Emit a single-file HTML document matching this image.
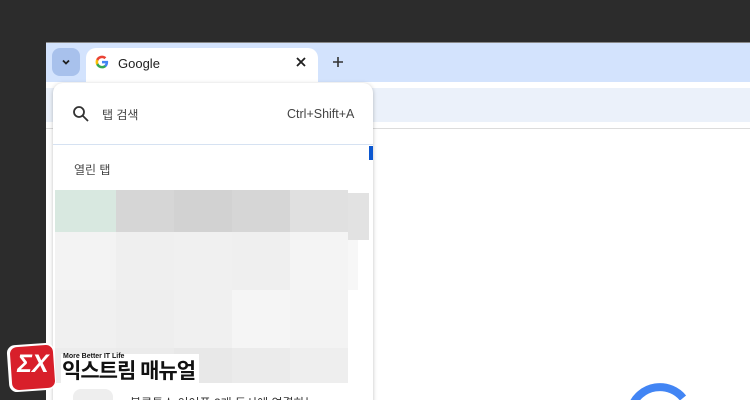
<!DOCTYPE html>
<html style="width:750px;height:400px;overflow:hidden"><head><meta charset="utf-8"><style>
*{margin:0;padding:0;box-sizing:border-box}
body{width:750px;height:400px;overflow:hidden;background:#2c2c2c;position:relative;font-family:"Liberation Sans","Noto Sans CJK KR",sans-serif}
.abs{position:absolute}
.cell{position:absolute}
</style></head><body>
<div class="abs" style="left:46px;top:42px;width:704px;height:358px;background:#fff;border-top:1px solid #888"></div>
<div class="abs" style="left:46px;top:43px;width:704px;height:39px;background:#d3e3fd"></div>
<div class="abs" style="left:46px;top:88px;width:704px;height:34px;background:#ebf1fa"></div>
<div class="abs" style="left:46px;top:128px;width:704px;height:1px;background:#dcdcdc"></div>
<div class="abs" style="left:52px;top:48px;width:28px;height:28px;border-radius:8px;background:#a8c1ec"></div>
<svg class="abs" style="left:60px;top:56px" width="12" height="12"><path d="M3 4.5 L6 7.5 L9 4.5" stroke="#1f1f1f" stroke-width="1.8" fill="none"/></svg>
<div class="abs" style="left:86px;top:48px;width:232px;height:36px;background:#fff;border-radius:10px 10px 0 0"></div>
<svg class="abs" style="left:95px;top:55px" width="14" height="14" viewBox="0 0 24 24"><path d="M22.5 12.3c0-.8-.1-1.5-.2-2.2H12v4.2h5.9c-.3 1.4-1 2.5-2.2 3.3v2.7h3.6c2.1-1.9 3.2-4.7 3.2-8z" fill="#4285f4"/><path d="M12 23c3 0 5.5-1 7.3-2.7l-3.6-2.7c-1 .7-2.2 1.1-3.7 1.1-2.9 0-5.3-1.9-6.2-4.5H2.2v2.8C4 20.5 7.7 23 12 23z" fill="#34a853"/><path d="M5.8 14.2c-.2-.7-.4-1.4-.4-2.2s.1-1.5.4-2.2V7H2.2C1.4 8.5 1 10.2 1 12s.4 3.5 1.2 5l3.6-2.8z" fill="#fbbc05"/><path d="M12 5.4c1.6 0 3.1.6 4.2 1.7l3.2-3.2C17.5 2.1 15 1 12 1 7.7 1 4 3.5 2.2 7l3.6 2.8c.9-2.6 3.300-4.4 6.2-4.4z" fill="#ea4335"/></svg>
<div class="abs" style="left:118px;top:56px;font-size:13px;color:#1f1f1f">Google</div>
<svg class="abs" style="left:296px;top:57px" width="10" height="10"><path d="M1 1L9 9M9 1L1 9" stroke="#1f1f1f" stroke-width="1.8"/></svg>
<svg class="abs" style="left:332px;top:56px" width="12" height="12"><path d="M6 1V11M1 6H11" stroke="#333" stroke-width="1.6"/></svg>
<div class="abs" style="left:53px;top:83px;width:320px;height:330px;background:#fff;border-radius:10px;box-shadow:0 1px 4px rgba(0,0,0,.25)"></div>
<svg class="abs" style="left:72px;top:105px" width="18" height="18"><circle cx="7" cy="7" r="5" stroke="#333" stroke-width="1.8" fill="none"/><path d="M10.5 10.5L16 16" stroke="#333" stroke-width="1.8"/></svg>
<div class="abs" style="left:102px;top:106px;font-size:12px;color:#444">탭 검색</div>
<div class="abs" style="left:287px;top:107px;font-size:12.5px;color:#444">Ctrl+Shift+A</div>
<div class="abs" style="left:53px;top:144px;width:320px;height:1px;background:#d6e2f2"></div>
<div class="abs" style="left:369px;top:146px;width:4px;height:14px;background:#0b57d0"></div>
<div class="abs" style="left:74px;top:161px;font-size:12px;color:#444">열린 탭</div>
<div class="cell" style="left:55px;top:190px;width:61px;height:42px;background:#d8e8e0"></div>
<div class="cell" style="left:116px;top:190px;width:58px;height:42px;background:#d6d6d6"></div>
<div class="cell" style="left:174px;top:190px;width:58px;height:42px;background:#d2d2d2"></div>
<div class="cell" style="left:232px;top:190px;width:58px;height:42px;background:#d6d6d6"></div>
<div class="cell" style="left:290px;top:190px;width:58px;height:42px;background:#e0e0e0"></div>
<div class="cell" style="left:348px;top:193px;width:21px;height:47px;background:#e2e2e2"></div>
<div class="cell" style="left:55px;top:232px;width:61px;height:58px;background:#f3f3f3"></div>
<div class="cell" style="left:116px;top:232px;width:58px;height:58px;background:#efefef"></div>
<div class="cell" style="left:174px;top:232px;width:58px;height:58px;background:#f0f0f0"></div>
<div class="cell" style="left:232px;top:232px;width:58px;height:58px;background:#efefef"></div>
<div class="cell" style="left:290px;top:232px;width:58px;height:58px;background:#f4f4f4"></div>
<div class="cell" style="left:348px;top:240px;width:10px;height:50px;background:#f7f7f7"></div>
<div class="cell" style="left:55px;top:290px;width:61px;height:58px;background:#f0f0f0"></div>
<div class="cell" style="left:116px;top:290px;width:58px;height:58px;background:#eeeeee"></div>
<div class="cell" style="left:174px;top:290px;width:58px;height:58px;background:#f0f0f0"></div>
<div class="cell" style="left:232px;top:290px;width:58px;height:58px;background:#f5f5f5"></div>
<div class="cell" style="left:290px;top:290px;width:58px;height:58px;background:#f3f3f3"></div>
<div class="cell" style="left:55px;top:348px;width:61px;height:35px;background:#ececec"></div>
<div class="cell" style="left:116px;top:348px;width:58px;height:35px;background:#ebebeb"></div>
<div class="cell" style="left:174px;top:348px;width:58px;height:35px;background:#e8e8e8"></div>
<div class="cell" style="left:232px;top:348px;width:58px;height:35px;background:#ebebeb"></div>
<div class="cell" style="left:290px;top:348px;width:58px;height:35px;background:#eeeeee"></div>
<div class="abs" style="left:73px;top:389px;width:40px;height:20px;border-radius:8px;background:#eee"></div>
<div class="abs" style="left:130px;top:394px;font-size:12px;color:#333">블루투스 이어폰 2개 동시에 연결하는</div>
<svg class="abs" style="left:620px;top:380px" width="80" height="20"><path d="M12 26 A30 30 0 0 1 63 18" stroke="#4285f4" stroke-width="8" fill="none"/></svg>
<div class="abs" style="left:8px;top:344px;width:47px;height:47px;border-radius:8px;background:#fff;transform:rotate(-4deg)"></div>
<div class="abs" style="left:11px;top:346px;width:43px;height:43px;border-radius:7px;background:#d81f2a;transform:rotate(-4deg)"></div>
<div class="abs" style="left:12px;top:350px;width:42px;font-size:25px;font-weight:bold;color:#fff;text-align:center;font-style:italic">ΣX</div>
<div class="abs" style="left:61px;top:354px;background:#fff;height:30px;width:138px"></div>
<div class="abs" style="left:63px;top:353px;font-size:7px;font-weight:bold;color:#111">More Better IT Life</div>
<div class="abs" style="left:62px;top:359px;font-size:21px;font-weight:bold;color:#111;letter-spacing:-1px;line-height:26px">익스트림 매뉴얼</div>
</body></html>
